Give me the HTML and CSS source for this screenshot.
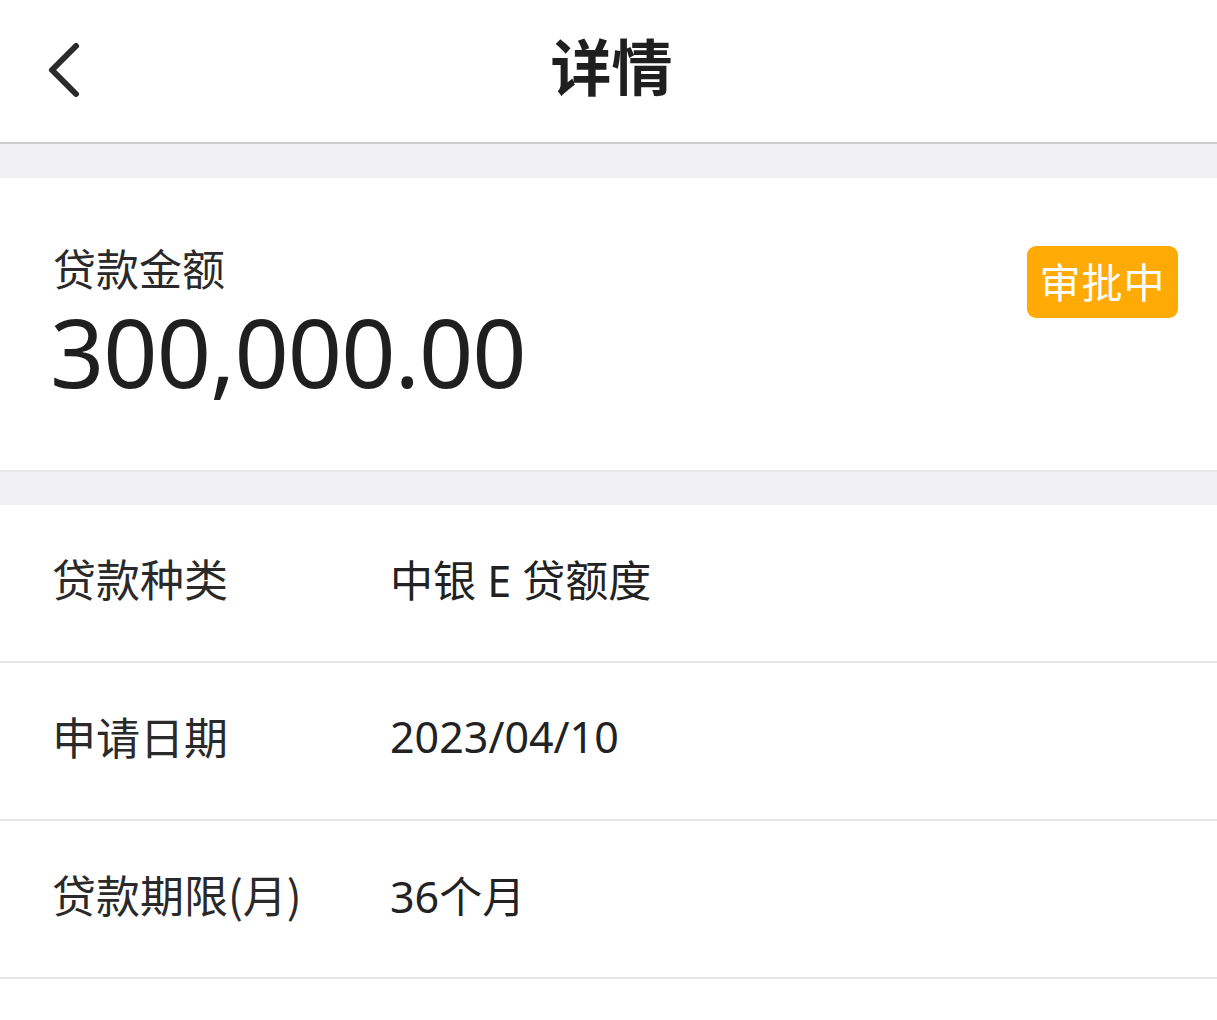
FILE: index.html
```html
<!DOCTYPE html>
<html lang="zh-CN">
<head>
<meta charset="utf-8">
<title>详情</title>
<link rel="stylesheet" href="styles.css">
</head>
<body>
<div class="page">
  <header class="nav">
    <span class="back">
      <svg width="40" height="60" viewBox="0 0 40 60"><path d="M34 6 L10 30 L34 54" fill="none" stroke="#2a2a2a" stroke-width="6" stroke-linecap="round" stroke-linejoin="round"/></svg>
    </span>
    <h1 class="title">详情</h1>
  </header>
  <div class="gap"></div>
  <section class="summary">
    <div class="summary-main">
      <div class="summary-label">贷款金额</div>
      <div class="amount">300,000.00</div>
    </div>
    <span class="badge">审批中</span>
  </section>
  <div class="gap gap-2"></div>
  <section class="list">
    <div class="row"><span class="row-label">贷款种类</span><span class="row-value">中银 E 贷额度</span></div>
    <div class="row"><span class="row-label">申请日期</span><span class="row-value">2023/04/10</span></div>
    <div class="row"><span class="row-label">贷款期限(月)</span><span class="row-value">36个月</span></div>
  </section>
</div>
</body>
</html>
```

FILE: styles.css
```css
* { box-sizing: border-box; }
html, body { margin: 0; padding: 0; background: #ffffff; }
body {
  font-family: "Noto Sans", "Noto Sans CJK SC", sans-serif;
  color: #222222;
}
.page { width: 1217px; }
.nav {
  height: 144px;
  border-bottom: 2px solid #cbcbcf;
  display: flex;
  align-items: center;
  justify-content: center;
  position: relative;
  background: #fff;
}
.back {
  position: absolute;
  left: 42px;
  top: 40px;
  width: 40px;
  height: 60px;
  display: block;
}
.back svg { display: block; }
.title {
  margin: 0;
  font-family: "Noto Sans CJK SC", sans-serif;
  font-size: 61px;
  font-weight: 700;
  line-height: 1;
  color: #1f1f1f;
  transform: translate(3px, -7px);
}
.gap { height: 34px; background: #efeff4; }
.gap-2 { height: 35px; border-top: 2px solid #e7e7ea; }
.summary {
  height: 292px;
  display: flex;
  align-items: flex-start;
  justify-content: space-between;
  padding: 65px 39px 0 53px;
}
.summary-label {
  font-family: "Noto Sans CJK SC", sans-serif;
  font-size: 43px;
  line-height: 48px;
  color: #2a2a2a;
}
.amount {
  font-family: "Noto Sans", sans-serif;
  font-size: 95px;
  line-height: 96px;
  margin-top: 12px;
  margin-left: -3px;
  color: #1f1f1f;
  letter-spacing: -1px;
}
.badge {
  margin-top: 3px;
  width: 151px;
  height: 72px;
  border-radius: 9px;
  background: #ffaa05;
  color: #fff;
  font-family: "Noto Sans CJK SC", sans-serif;
  font-size: 41px;
  display: flex;
  align-items: center;
  justify-content: center;
  letter-spacing: 1px;
  padding-bottom: 4px;
}
.list { background: #fff; }
.row {
  height: 158px;
  border-bottom: 2px solid #e6e6e8;
  display: flex;
  align-items: center;
  padding-left: 52px;
  padding-bottom: 10px;
}
.row-label {
  width: 338px;
  font-family: "Noto Sans CJK SC", sans-serif;
  font-size: 44px;
  color: #2a2a2a;
}
.row-value {
  font-family: "Noto Sans", "Noto Sans CJK SC", sans-serif;
  font-size: 43px;
  color: #222;
}
```
